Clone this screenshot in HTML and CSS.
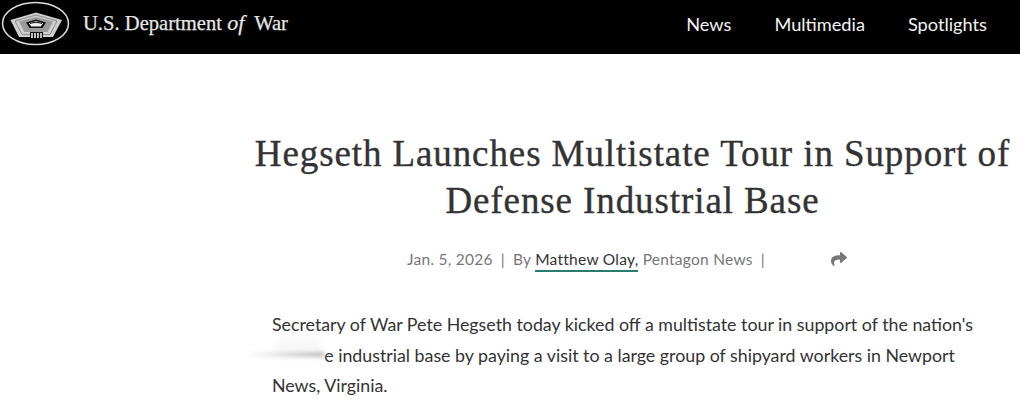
FILE: index.html
```html
<!DOCTYPE html>
<html lang="en">
<head>
<meta charset="utf-8">
<title>Hegseth Launches Multistate Tour</title>
<link rel="stylesheet" href="styles.css">
</head>
<body>
<header class="topbar">
  <a class="brand" href="#">
    <svg class="seal" viewBox="0 0 70 46" width="70" height="46" aria-hidden="true">
      <ellipse cx="34.500" cy="23.500" rx="33" ry="21" fill="#000" stroke="#dcdcdc" stroke-width="1.500"/>
      <path d="M35 12.500 L61 20 L52 37 H18 L9.500 20 Z" fill="#cfcfcf"/>
      <path d="M35 15 L56 21 L49 34.500 H21 L14 21 Z" fill="none" stroke="#777" stroke-width="0.800"/>
      <path d="M35 17 L52 21.500 L46.500 32 H23.500 L18 21.500 Z" fill="#9a9a9a"/>
      <path d="M35 19.500 L45 22.500 L41.500 28 H28.500 L25 22.500 Z" fill="#111"/>
      <path d="M35 21 L42 23.300 L39.800 26.500 H30.200 L28 23.300 Z" fill="#f0f0f0"/>
      <path d="M29 23 Q35 20.500 41 23 L41 24 Q35 22 29 24 Z" fill="#222"/>
      <path d="M29 32 H42 V38.500 H29 Z" fill="#111"/>
      <path d="M31 33 V38 M34 33 V38 M37 33 V38 M40 33 V38" stroke="#f5f5f5" stroke-width="1.500"/>
    </svg>
    <span class="wordmark">U.S. Department <i>of</i>&nbsp; War</span>
  </a>
  <nav class="nav">
    <a href="#">News</a>
    <a href="#">Multimedia</a>
    <a href="#">Spotlights</a>
  </nav>
</header>
<main class="article">
  <h1 class="title">Hegseth Launches Multistate Tour in Support of Defense Industrial Base</h1>
  <div class="meta">
    <span>Jan. 5, 2026</span><span class="sep">|</span><span>By <a class="author" href="#">Matthew Olay,</a> Pentagon News</span><span class="sep">|</span>
    <svg class="share" viewBox="0 0 512 512" width="16" height="16" aria-hidden="true"><path d="M503.691 189.836L327.687 37.851C312.281 24.546 288 35.347 288 56.015v80.053C127.371 137.907 0 170.1 0 322.326c0 61.441 39.581 122.309 83.333 154.132 13.653 9.931 33.111-2.533 28.077-18.631C66.066 312.814 132.917 274.316 288 272.085V360c0 20.7 24.3 31.453 39.687 18.164l176.004-152c11.071-9.562 11.086-26.753 0-36.328z" fill="#777"/></svg>
  </div>
  <p class="lede">Secretary of War Pete Hegseth today kicked off a multistate tour in support of the nation's <span class="smudged">defens</span>e industrial base by paying a visit to a large group of shipyard workers in Newport News, Virginia.</p>
</main>
</body>
</html>
```
FILE: styles.css
```css
* { box-sizing: border-box; }
html, body { margin: 0; padding: 0; background: #fff; overflow: hidden; }
body { font-family: Lato, "Open Sans", sans-serif; color: #333; }
a { color: inherit; text-decoration: none; }

.topbar {
  height: 54px;
  background: #000;
  display: flex;
  align-items: flex-start;
  justify-content: space-between;
  padding: 0 33px 0 1px;
}
.brand { display: flex; align-items: center; gap: 12px; height: 46px; }
.seal { display: block; flex: none; }
.wordmark {
  font-family: "Liberation Serif", serif;
  font-size: 20.600px;
  color: #e6e6e6;
  white-space: nowrap;
  -webkit-text-stroke: 0.25px #e6e6e6;
}
.wordmark i { font-size: 22px; }
.nav { display: flex; gap: 43px; height: 48px; align-items: center; font-size: 18.200px; color: #f2f2f2; }

.article { display: flex; flex-direction: column; align-items: center; padding-left: 253px; padding-right: 8px; }
.title {
  margin: 76px 0 0;
  font-family: "Liberation Serif", serif;
  font-weight: 400;
  font-size: 37px;
  line-height: 47px;
  letter-spacing: 0.900px;
  text-align: center;
  color: #333;
  -webkit-text-stroke: 0.35px #333;
}
.meta {
  margin-top: 22px;
  padding-right: 11px;
  display: flex;
  align-items: center;
  height: 26px;
  font-size: 15.500px;
  letter-spacing: 0.260px;
  color: #777;
  white-space: pre;
}
.sep { margin: 0 8px; }
.author { color: #333; border-bottom: 2px solid #2a7d6c; padding-bottom: 2px; }
.share { margin-left: 58px; }
.lede {
  margin: 37px 0 0;
  width: 721px;
  font-size: 17.800px;
  line-height: 30.500px;
  color: #333;
}
.smudged { position: relative; color: transparent; }
.smudged::after {
  content: "";
  position: absolute;
  right: 0;
  top: 8px;
  width: 78px;
  height: 5px;
  background: linear-gradient(to right, rgba(190,190,190,0), #b8b8b8);
  filter: blur(2px);
}
.smudged::before {
  content: "";
  position: absolute;
  right: 2px;
  top: -6px;
  width: 46px;
  height: 14px;
  background: #f8f8f8;
  filter: blur(3px);
}
```
